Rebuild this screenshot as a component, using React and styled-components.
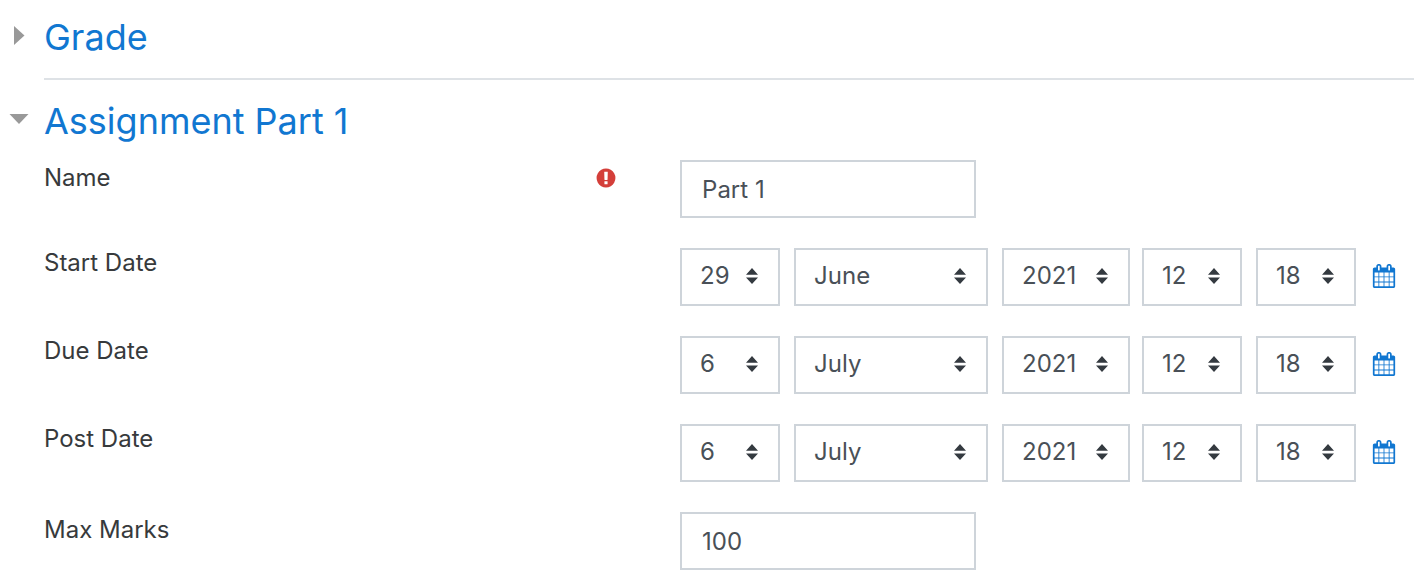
import { useState } from "react";
import styled, { createGlobalStyle } from "styled-components";

const GlobalStyle = createGlobalStyle`
  *, *::before, *::after {
    box-sizing: border-box;
  }

  body {
    margin: 0;
    background-color: #fff;
    color: #373a3c;
    font-family: Inter, "Liberation Sans", sans-serif;
    font-size: 24px;
    line-height: 30px;
  }
`;

const Section = styled.section`
  padding-top: 20px;

  &:first-child {
    padding-top: 16px;
  }
`;

const SectionTitle = styled.h3`
  margin: 0;
  font-size: 36px;
  font-weight: 400;
  line-height: 42px;
`;

const Toggle = styled.button`
  width: 100%;
  padding: 0 0 0 9px;
  border: 0;
  background: none;
  color: #1177d1;
  font: inherit;
  text-align: left;
  cursor: pointer;

  display: flex;
  align-items: center;
  gap: 15px;
`;

const ToggleIcon = styled.svg`
  flex: none;
  width: 20px;
  height: 24px;
  fill: #999;
`;

const Divider = styled.hr`
  margin: 20px 0 0 44px;
  border: 0;
  border-top: 2px solid #dee2e6;
`;

const Rows = styled.div`
  padding: 18px 0 0 44px;

  display: flex;
  flex-direction: column;
  gap: 30px;
`;

const Row = styled.div`
  display: grid;
  grid-template-columns: 13fr 15fr;
  align-items: start;
`;

const LabelCell = styled.div`
  padding-right: 63px;
  padding-top: ${({ $text }) => ($text ? "3px" : "0")};

  display: flex;
  align-items: center;
  justify-content: space-between;
`;

const Required = styled.svg`
  width: 22px;
  height: 22px;
  fill: #d43f3a;
`;

const TextInput = styled.input`
  width: 296px;
  height: 58px;
  padding: 0 20px;
  border: 2px solid #ced4da;
  border-radius: 0;
  background-color: #fff;
  color: #495057;
  font: inherit;
`;

const DateFields = styled.div`
  display: flex;
  gap: 12px;
`;

const FieldGroup = styled.div`
  display: flex;
  align-items: center;
  gap: 14px;
`;

const SelectBox = styled.div`
  width: ${({ $width }) => $width}px;
  height: 58px;
  position: relative;
`;

const StyledSelect = styled.select`
  width: 100%;
  height: 100%;
  padding: 0 18px 2px;
  appearance: none;
  border: 2px solid #ced4da;
  border-radius: 0;
  background-color: #fff;
  color: #495057;
  font: inherit;
  cursor: pointer;
`;

const Arrows = styled.svg`
  position: absolute;
  top: 20px;
  right: 22px;
  width: 12px;
  height: 16px;
  fill: #343a40;
  pointer-events: none;
`;

const CalendarButton = styled.button`
  padding: 0 2px 2px;
  border: 0;
  background: none;
  color: #1177d1;
  cursor: pointer;

  display: flex;
`;

const CalendarIcon = styled.svg`
  width: 24px;
  height: 24px;
  fill: currentColor;
`;

const MONTHS = [
  "January",
  "February",
  "March",
  "April",
  "May",
  "June",
  "July",
  "August",
  "September",
  "October",
  "November",
  "December",
];

const range = (from, to) =>
  Array.from({ length: to - from + 1 }, (_, i) => String(from + i));

const DAYS = range(1, 31);
const YEARS = range(2015, 2030);
const HOURS = range(0, 23);
const MINUTES = range(0, 59);

const Collapsible = ({ title, open, onToggle, children }) => (
  <Section>
    <SectionTitle>
      <Toggle type="button" aria-expanded={open} onClick={onToggle}>
        <ToggleIcon viewBox="0 0 20 24" aria-hidden="true">
          <path d={open ? "M0.5 5h19l-9.5 10z" : "M5 1l10.5 9.5L5 20z"} />
        </ToggleIcon>
        {title}
      </Toggle>
    </SectionTitle>
    {open && children}
  </Section>
);

const Select = ({ label, options, value, width }) => (
  <SelectBox $width={width}>
    <StyledSelect aria-label={label} defaultValue={value}>
      {options.map((option) => (
        <option key={option}>{option}</option>
      ))}
    </StyledSelect>
    <Arrows viewBox="0 0 12 16" aria-hidden="true">
      <path d="M6 0l6 6.8H0zM6 16L0 9.6h12z" />
    </Arrows>
  </SelectBox>
);

const TextRow = ({ id, label, value, required }) => (
  <Row>
    <LabelCell $text>
      <label htmlFor={id}>{label}</label>
      {required && (
        <Required viewBox="0 0 1792 1792" role="img" aria-label="Required">
          <path d="M896 128q209 0 385.5 103t279.5 279.5 103 385.5-103 385.5-279.5 279.5-385.5 103-385.5-103-279.5-279.5-103-385.5 103-385.5 279.5-279.5 385.5-103zm128 1247v-190q0-14-9-23.5t-22-9.5h-192q-13 0-23 10t-10 23v190q0 13 10 23t23 10h192q13 0 22-9.5t9-23.5zm-2-344l18-621q0-12-10-18-10-8-24-8h-220q-14 0-24 8-10 6-10 18l18 621q0 10 10 17.5t24 7.5h185q14 0 23.5-7.5t10.5-17.5z" />
        </Required>
      )}
    </LabelCell>
    <TextInput id={id} type="text" defaultValue={value} required={required} />
  </Row>
);

const DateRow = ({ id, label, day, month }) => (
  <Row role="group" aria-labelledby={id}>
    <LabelCell>
      <span id={id}>{label}</span>
    </LabelCell>
    <DateFields>
      <FieldGroup>
        <Select label="Day" options={DAYS} value={day} width={100} />
        <Select label="Month" options={MONTHS} value={month} width={194} />
        <Select label="Year" options={YEARS} value="2021" width={128} />
      </FieldGroup>
      <FieldGroup>
        <Select label="Hour" options={HOURS} value="12" width={100} />
        <Select label="Minute" options={MINUTES} value="18" width={100} />
        <CalendarButton type="button" aria-label="Calendar">
          <CalendarIcon viewBox="0 0 1792 1792" aria-hidden="true">
            <path d="M192 1664h288v-288h-288v288zm352 0h320v-288h-320v288zm-352-352h288v-320h-288v320zm352 0h320v-320h-320v320zm-352-384h288v-288h-288v288zm736 736h320v-288h-320v288zm-384-736h320v-288h-320v288zm768 736h288v-288h-288v288zm-384-352h320v-320h-320v320zm-352-864v-288q0-13-9.5-22.5t-22.5-9.5h-64q-13 0-22.5 9.5t-9.5 22.5v288q0 13 9.5 22.5t22.5 9.5h64q13 0 22.5-9.5t9.5-22.5zm736 864h288v-320h-288v320zm-384-384h320v-288h-320v288zm384 0h288v-288h-288v288zm32-480v-288q0-13-9.5-22.5t-22.5-9.5h-64q-13 0-22.5 9.5t-9.5 22.5v288q0 13 9.5 22.5t22.5 9.5h64q13 0 22.5-9.5t9.5-22.5zm384-64v1280q0 52-38 90t-90 38h-1408q-52 0-90-38t-38-90v-1280q0-52 38-90t90-38h128v-96q0-66 47-113t113-47h64q66 0 113 47t47 113v96h384v-96q0-66 47-113t113-47h64q66 0 113 47t47 113v96h128q52 0 90 38t38 90z" />
          </CalendarIcon>
        </CalendarButton>
      </FieldGroup>
    </DateFields>
  </Row>
);

const App = () => {
  const [gradeOpen, setGradeOpen] = useState(false);
  const [partOpen, setPartOpen] = useState(true);

  return (
    <>
      <GlobalStyle />
      <form>
        <Collapsible
          title="Grade"
          open={gradeOpen}
          onToggle={() => setGradeOpen(!gradeOpen)}
        />
        <Divider />
        <Collapsible
          title="Assignment Part 1"
          open={partOpen}
          onToggle={() => setPartOpen(!partOpen)}
        >
          <Rows>
            <TextRow id="name" label="Name" value="Part 1" required />
            <DateRow id="start" label="Start Date" day="29" month="June" />
            <DateRow id="due" label="Due Date" day="6" month="July" />
            <DateRow id="post" label="Post Date" day="6" month="July" />
            <TextRow id="marks" label="Max Marks" value="100" />
          </Rows>
        </Collapsible>
      </form>
    </>
  );
};

export default App;
